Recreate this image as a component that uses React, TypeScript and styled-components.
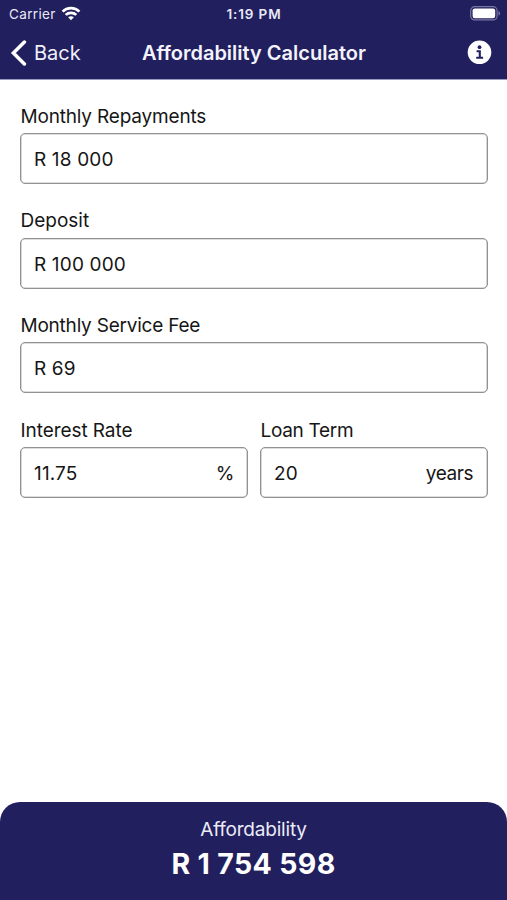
import React from "react";
import styled, { createGlobalStyle } from "styled-components";

const navy = "#221f5e";

const GlobalStyle = createGlobalStyle`
  *, *::before, *::after { box-sizing: border-box; }
  body { margin: 0; background: #fff; }
`;

const Screen = styled.main`
  display: flex;
  flex-direction: column;
  width: 100%;
  height: 100vh;
  overflow: hidden;
  background: #fff;
  color: #161616;
  font-family: Inter, sans-serif;
  font-size: 19px;
`;

const Header = styled.header`
  flex: none;
  height: 80px;
  background: ${navy};
  color: #fff;
  border-bottom: 1px solid #9a99bf;
`;

const StatusBar = styled.div`
  display: grid;
  grid-template-columns: 1fr auto 1fr;
  align-items: center;
  height: 27px;
  padding: 0 6px 0 9px;
  color: #e9e9f6;
  font-size: 13.5px;
`;

const Carrier = styled.div`
  display: flex;
  align-items: center;
  gap: 5px;
  letter-spacing: 0.35px;
`;

const Clock = styled.time`
  font-weight: 600;
  letter-spacing: 0.85px;
  margin-right: 2px;
`;

const BatterySlot = styled.div`
  display: flex;
  justify-content: flex-end;
`;

const NavBar = styled.nav`
  display: grid;
  grid-template-columns: 1fr auto 1fr;
  align-items: center;
  height: 51px;
  padding: 0 15px 0 10px;
`;

const BackButton = styled.button`
  display: flex;
  align-items: center;
  gap: 7px;
  padding: 0;
  border: 0;
  background: none;
  color: #f0f0fa;
  font: 400 20px/26px Inter, sans-serif;
`;

const Title = styled.h1`
  margin: 0 0 0 6px;
  font-size: 20px;
  line-height: 26px;
  font-weight: 600;
  color: #f3f3fc;
`;

const InfoButton = styled.button`
  display: flex;
  justify-self: end;
  padding: 0;
  border: 0;
  background: none;
`;

const Form = styled.form`
  flex: 1;
  display: flex;
  flex-direction: column;
  gap: 25.3px;
  padding: 24.6px 19px 0 20px;
`;

const FieldRow = styled.div`
  display: grid;
  grid-template-columns: 1fr 1fr;
  gap: 12px;
`;

const Field = styled.label`
  display: flex;
  flex-direction: column;
  gap: 4.4px;
  min-width: 0;
`;

const Label = styled.span<{ $tracking?: number }>`
  padding-left: 0.5px;
  line-height: 24px;
  letter-spacing: ${(p) => p.$tracking ?? 0}px;
`;

const InputBox = styled.span`
  display: flex;
  align-items: center;
  height: 51px;
  padding: 1.8px 14px 0 13px;
  border: 1px solid #929292;
  border-radius: 5px;
  box-shadow: inset 0 0 0 0.6px #bdbdbd;
`;

const Input = styled.input`
  flex: 1;
  min-width: 0;
  width: 0;
  padding: 0;
  border: 0;
  outline: 0;
  background: none;
  color: inherit;
  font: inherit;
  letter-spacing: 0.15px;
`;

const Unit = styled.span<{ $tracking?: number }>`
  letter-spacing: ${(p) => p.$tracking ?? 0}px;
`;

const Result = styled.footer`
  flex: none;
  display: flex;
  flex-direction: column;
  align-items: center;
  height: 98px;
  padding-top: 15px;
  border-radius: 20px 20px 0 0;
  background: ${navy};
  color: #fff;
`;

const ResultLabel = styled.span`
  line-height: 26px;
  letter-spacing: -0.2px;
  color: #ebebf8;
`;

const ResultValue = styled.output`
  margin-top: 3px;
  font-size: 28.5px;
  line-height: 36px;
  font-weight: 700;
  letter-spacing: 0.35px;
`;

const WifiIcon = () => (
  <svg width="20" height="16" viewBox="0 0 20 16" fill="none" stroke="#fff" strokeWidth="2.7">
    <path d="M1.6 5.6C6.2 1 13.8 1 18.4 5.6" />
    <path d="M4.7 8.9c2.9-2.8 7.7-2.8 10.6 0" />
    <path d="M10 14.2 7.1 11.2c1.6-1.4 4.2-1.4 5.8 0Z" fill="#fff" stroke="none" />
  </svg>
);

const BatteryIcon = () => (
  <svg width="31" height="15" viewBox="0 0 31 15" fill="none">
    <rect x="0.7" y="0.7" width="26.4" height="13.2" rx="4" stroke="#7977a4" strokeWidth="1.2" />
    <rect x="2.6" y="2.4" width="22.6" height="9.8" rx="2.2" fill="#fff" />
    <path d="M28.5 5c2.1.8 2.1 3.8 0 4.6Z" fill="#7977a4" />
  </svg>
);

const ChevronIcon = () => (
  <svg width="17" height="26" viewBox="0 0 17 26" fill="none" stroke="#fff" strokeWidth="3.5">
    <path d="m14.4 2-11 11 11 11" strokeLinecap="round" />
  </svg>
);

const InfoIcon = () => (
  <svg width="25" height="25" viewBox="0 0 25 25">
    <circle cx="12.5" cy="12.3" r="11.8" fill="#fff" />
    <circle cx="12.5" cy="7.2" r="1.9" fill={navy} />
    <path d="M9.6 11.3h3.2v6.2M9.2 17.7h6.9" fill="none" stroke={navy} strokeWidth="2.1" />
  </svg>
);

interface AmountFieldProps {
  label: string;
  value: string;
  tracking?: number;
  unit?: string;
  unitTracking?: number;
}

const AmountField = ({ label, value, tracking, unit, unitTracking }: AmountFieldProps) => (
  <Field>
    <Label $tracking={tracking}>{label}</Label>
    <InputBox>
      <Input defaultValue={value} />
      {unit && <Unit $tracking={unitTracking}>{unit}</Unit>}
    </InputBox>
  </Field>
);

export default function App() {
  return (
    <Screen>
      <GlobalStyle />
      <Header>
        <StatusBar>
          <Carrier>
            Carrier
            <WifiIcon />
          </Carrier>
          <Clock>1:19 PM</Clock>
          <BatterySlot>
            <BatteryIcon />
          </BatterySlot>
        </StatusBar>
        <NavBar>
          <BackButton type="button">
            <ChevronIcon />
            Back
          </BackButton>
          <Title>Affordability Calculator</Title>
          <InfoButton type="button" aria-label="Information">
            <InfoIcon />
          </InfoButton>
        </NavBar>
      </Header>
      <Form>
        <AmountField label="Monthly Repayments" value="R 18 000" tracking={-0.18} />
        <AmountField label="Deposit" value="R 100 000" />
        <AmountField label="Monthly Service Fee" value="R 69" tracking={-0.22} />
        <FieldRow>
          <AmountField label="Interest Rate" value="11.75" tracking={-0.07} unit="%" unitTracking={-1.3} />
          <AmountField label="Loan Term" value="20" tracking={-0.3} unit="years" unitTracking={-0.45} />
        </FieldRow>
      </Form>
      <Result>
        <ResultLabel>Affordability</ResultLabel>
        <ResultValue>R 1 754 598</ResultValue>
      </Result>
    </Screen>
  );
}
